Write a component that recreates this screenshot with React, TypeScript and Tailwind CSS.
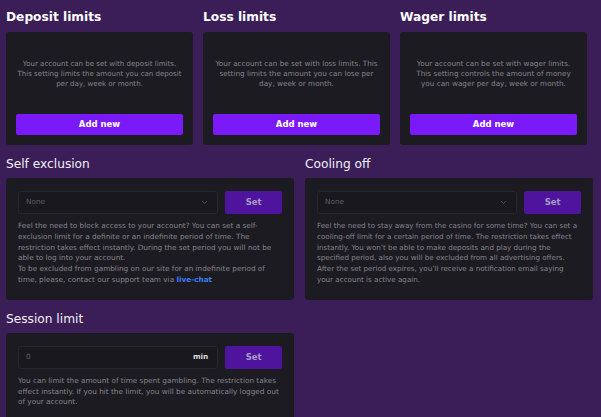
import React from 'react';

const limitCards = [
  {
    title: 'Deposit limits',
    text: 'Your account can be set with deposit limits. This setting limits the amount you can deposit per day, week or month.',
    size: 'text-[7.05px]',
  },
  {
    title: 'Loss limits',
    text: 'Your account can be set with loss limits. This setting limits the amount you can lose per day, week or month.',
    size: 'text-[7.25px]',
  },
  {
    title: 'Wager limits',
    text: 'Your account can be set with wager limits. This setting controls the amount of money you can wager per day, week or month.',
    size: 'text-[7.25px]',
  },
];

const font = { fontFamily: '"DejaVu Sans", Verdana, sans-serif' };

function LimitCard({ title, text, size }: { title: string; text: string; size: string }) {
  return (
    <div className="w-[187px]">
      <h2 className="h-[32px] pt-[11px] text-[12.2px] font-bold text-white leading-[12px]">{title}</h2>
      <div className="h-[113px] bg-[#1c1b21] rounded-[3px] p-[10px] flex flex-col">
        <div className="flex-1 flex items-center justify-center pb-[8px] -mx-[1px]">
          <p className={`${size} leading-[10.2px] text-[#85838c] text-center`}>{text}</p>
        </div>
        <button className="h-[21px] w-full bg-[#7a1af8] rounded-[2px] text-white text-[8.5px] font-bold">
          Add new
        </button>
      </div>
    </div>
  );
}

function SelectRow({ value, suffix }: { value: string; suffix?: string }) {
  return (
    <div className="flex gap-[7px] h-[23px]">
      <div className="w-[201px] h-full border border-[#27262c] bg-[#19181d] rounded-[3px] flex items-center justify-between pl-[7px] pr-[9px]">
        <span className="text-[7.3px] text-[#5f5d66]">{value}</span>
        {suffix ? (
          <span className="text-[7.3px] font-bold text-[#d6d4dc]">{suffix}</span>
        ) : (
          <svg width="7" height="5" viewBox="0 0 7 5" fill="none">
            <path d="M1 1l2.5 2.5L6 1" stroke="#4d4b54" strokeWidth="1" />
          </svg>
        )}
      </div>
      <button className="w-[57px] h-full bg-[#4e149e] rounded-[2px] text-[#a99bc4] text-[8.5px] font-bold">Set</button>
    </div>
  );
}

function Section({ title, children }: { title: string; children: React.ReactNode }) {
  return (
    <div className="w-[288px]">
      <h2 className="h-[33px] pt-[13px] text-[12.2px] font-medium text-[#f1eef5] leading-[12px]">{title}</h2>
      <div className="bg-[#1c1b21] rounded-[3px] px-[12px] pt-[13px] pb-[14px]">{children}</div>
    </div>
  );
}

const bodyText = 'mt-[7px] text-[7.3px] leading-[10.8px] text-[#85838c]';

export default function App() {
  return (
    <div className="w-[601px] h-[417px] overflow-hidden bg-[#3b1e57] pl-[6px]" style={font}>
      <div className="flex gap-[10px]">
        {limitCards.map((c) => (
          <LimitCard key={c.title} title={c.title} text={c.text} size={c.size} />
        ))}
      </div>

      <div className="flex gap-[11px]">
        <Section title="Self exclusion">
          <SelectRow value="None" />
          <p className={bodyText}>
            Feel the need to block access to your account? You can set a self-exclusion limit for a definite or an
            indefinite period of time. The restriction takes effect instantly. During the set period you will not be
            able to log into your account.
            <br />
            To be excluded from gambling on our site for an indefinite period of time, please, contact our support team
            via <span className="text-[#3d7bf2] font-bold">live-chat</span>
          </p>
        </Section>
        <Section title="Cooling off">
          <SelectRow value="None" />
          <p className="mt-[7px] text-[7.15px] leading-[10.8px] text-[#85838c]">
            Feel the need to stay away from the casino for some time? You can set a cooling-off limit for a certain
            period of time. The restriction takes effect instantly. You won’t be able to make deposits and play during
            the specified period, also you will be excluded from all advertising offers. After the set period expires,
            you’ll receive a notification email saying your account is active again.
          </p>
        </Section>
      </div>

      <Section title="Session limit">
        <SelectRow value="0" suffix="min" />
        <p className={bodyText}>
          You can limit the amount of time spent gambling. The restriction takes effect instantly. If you hit the
          limit, you will be automatically logged out of your account.
        </p>
      </Section>
    </div>
  );
}
